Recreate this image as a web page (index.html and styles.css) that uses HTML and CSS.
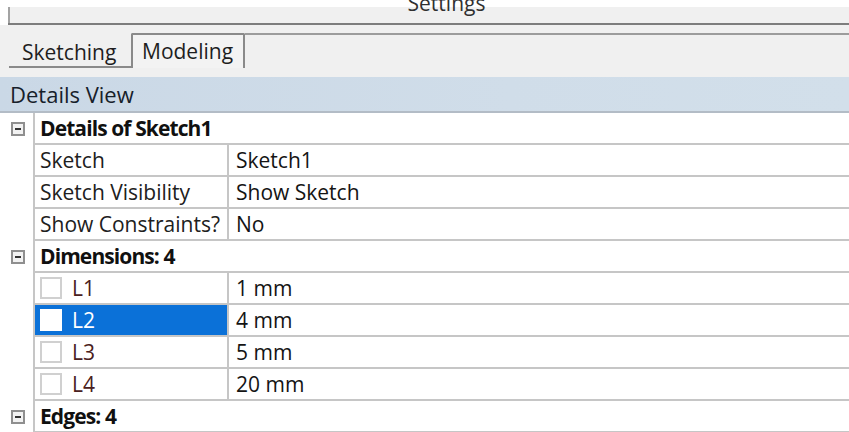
FILE: index.html
```html
<!DOCTYPE html>
<html lang="en">
<head>
<meta charset="utf-8">
<title>Settings</title>
<link rel="stylesheet" href="styles.css">
</head>
<body>
<div class="settings">
  <header class="titlebar"><span class="titlebar__text">Settings</span></header>

  <nav class="tabs">
    <div class="tab tab--back">Sketching</div>
    <div class="tab tab--front">Modeling</div>
    <div class="tabs__rest"></div>
  </nav>

  <div class="details-head">Details View</div>

  <div class="props">
    <div class="row row--group">
      <div class="gutter"><span class="toggle"></span></div>
      <div class="group-title">Details of Sketch1</div>
    </div>
    <div class="row">
      <div class="gutter"></div>
      <div class="name">Sketch</div>
      <div class="value">Sketch1</div>
    </div>
    <div class="row">
      <div class="gutter"></div>
      <div class="name">Sketch Visibility</div>
      <div class="value">Show Sketch</div>
    </div>
    <div class="row">
      <div class="gutter"></div>
      <div class="name">Show Constraints?</div>
      <div class="value">No</div>
    </div>

    <div class="row row--group">
      <div class="gutter"><span class="toggle"></span></div>
      <div class="group-title">Dimensions: 4</div>
    </div>
    <div class="row">
      <div class="gutter"></div>
      <div class="name name--dim"><span class="check"></span>L1</div>
      <div class="value">1 mm</div>
    </div>
    <div class="row">
      <div class="gutter"></div>
      <div class="name name--dim name--selected"><span class="check"></span>L2</div>
      <div class="value">4 mm</div>
    </div>
    <div class="row">
      <div class="gutter"></div>
      <div class="name name--dim"><span class="check"></span>L3</div>
      <div class="value">5 mm</div>
    </div>
    <div class="row">
      <div class="gutter"></div>
      <div class="name name--dim"><span class="check"></span>L4</div>
      <div class="value">20 mm</div>
    </div>

    <div class="row row--group">
      <div class="gutter"><span class="toggle"></span></div>
      <div class="group-title">Edges: 4</div>
    </div>
  </div>
</div>
</body>
</html>
```

FILE: styles.css
```css
* {
  box-sizing: border-box;
}

html, body {
  margin: 0;
  padding: 0;
  background: #ffffff;
}

body {
  width: 849px;
  height: 432px;
  overflow: hidden;
  font-family: "Open Sans", "Noto Sans", "Liberation Sans", sans-serif;
  font-size: 21px;
  color: #1a1a1a;
}

.settings {
  display: flex;
  flex-direction: column;
}

/* window caption strip */
.titlebar {
  height: 25px;
  margin-left: 8px;
  display: flex;
  justify-content: center;
  align-items: flex-start;
  padding-left: 36px;
  border-bottom: 2px solid #7d7d7d;
  background:
    linear-gradient(90deg, #a3a3a3 0 2px, transparent 2px) 0 7px / 100% 100% no-repeat,
    linear-gradient(#ffffff 0 7px, #f0f0f0 7px);
}

.titlebar__text {
  margin-top: -7px;
  line-height: 21px;
  color: #303030;
}

/* tab strip */
.tabs {
  height: 52px;
  display: flex;
  align-items: flex-end;
  padding: 8px 0 9px 9px;
  background: #f0f0f0;
}

.tab {
  line-height: 24px;
  color: #1e1e1e;
  white-space: nowrap;
}

.tab--back {
  width: 122px;
  height: 28px;
  padding-left: 13px;
  border-bottom: 2px solid #8a8a8a;
}

.tab--front {
  width: 114px;
  height: 35px;
  padding: 4px 0 0 9px;
  border: 2px solid #8a8a8a;
  border-bottom: 0;
  border-radius: 2px 2px 0 0;
  background: #f3f3f3;
}

.tabs__rest {
  flex: 1;
  align-self: stretch;
  border-top: 2px solid #9c9c9c;
}

/* panel header */
.details-head {
  height: 36px;
  padding-left: 10px;
  font-size: 22px;
  line-height: 34px;
  color: #16202a;
  background: linear-gradient(90deg, #cad8e6, #d0dde9 60%, #d2dfea);
  border-bottom: 2px solid #b3bcc6;
}

/* property grid */
.props {
  display: flex;
  flex-direction: column;
}

.row {
  display: grid;
  grid-template-columns: 33px 196px 1fr;
  height: 32px;
  line-height: 30px;
}

.gutter {
  display: flex;
  align-items: center;
  padding-left: 11px;
  background: #ffffff;
}

.toggle {
  position: relative;
  width: 14px;
  height: 14px;
  border: 2px solid #8f8f8f;
  background: #f2f2f2;
}

.toggle::before {
  content: "";
  position: absolute;
  left: 2px;
  right: 2px;
  top: 4px;
  height: 2px;
  background: #333333;
}

.group-title {
  grid-column: 2 / 4;
  padding-left: 5px;
  font-weight: 700;
  letter-spacing: -0.9px;
  color: #101010;
  border-left: 2px solid #c6c6c6;
  border-bottom: 2px solid #c6c6c6;
}

.name {
  padding-left: 5px;
  color: #202020;
  white-space: nowrap;
  border-left: 2px solid #c6c6c6;
  border-right: 2px solid #c6c6c6;
  border-bottom: 2px solid #c6c6c6;
}

.name--dim {
  display: flex;
  align-items: center;
  gap: 10px;
  color: #4a2020;
}

.name--selected {
  background: #0b71d8;
  color: #ffffff;
}

.check {
  width: 22px;
  height: 22px;
  border: 2px solid #d0d0d0;
  background: #ffffff;
}

.name--selected .check {
  border-color: #ffffff;
}

.value {
  padding-left: 7px;
  color: #141414;
  white-space: nowrap;
  border-bottom: 2px solid #c6c6c6;
}
```
